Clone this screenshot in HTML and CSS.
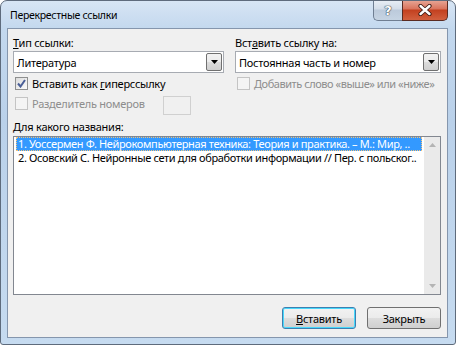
FILE: index.html
```html
<!DOCTYPE html>
<html lang="ru">
  <head>
    <meta charset="UTF-8" />
    <meta name="viewport" content="width=device-width, initial-scale=1.0" />
    <title>Перекрестные ссылки</title>
    <link rel="stylesheet" href="styles.css">
  </head>
  <body>
    <div class="window">
      <div class="titlebar">
        <span class="title">Перекрестные ссылки</span>
        <div class="caption-buttons">
          <div class="cap-btn help">?</div>
          <div class="cap-btn close">
            <svg width="14" height="12" viewBox="0 0 14 12">
              <path d="M2.5 2 L11.5 10 M11.5 2 L2.5 10" stroke="#3b1a14" stroke-width="4.2" stroke-linecap="round" />
              <path d="M2.5 2 L11.5 10 M11.5 2 L2.5 10" stroke="#ffffff" stroke-width="2.4" stroke-linecap="round" />
            </svg>
          </div>
        </div>
      </div>

      <div class="client">
        <div class="columns">
          <div class="col">
            <div class="field-label"><u>Т</u>ип ссылки:</div>
            <div class="combo">
              <span class="combo-text">Литература</span>
              <span class="combo-btn">
                <svg width="7" height="4" viewBox="0 0 7 4"><path d="M0 0 H7 L3.5 4 Z" fill="#000" /></svg>
              </span>
            </div>
            <div class="check-row first">
              <span class="checkbox checked">
                <svg width="9" height="9" viewBox="0 0 9 9">
                  <path d="M1 4.5 L3.5 7.5 L8 1" fill="none" stroke="#4a5f97" stroke-width="2" />
                </svg>
              </span>
              <span>Вставить как <u>г</u>иперссылку</span>
            </div>
            <div class="check-row second disabled">
              <span class="checkbox"></span>
              <span>Разделитель номеров</span>
              <span class="small-input"></span>
            </div>
          </div>

          <div class="col">
            <div class="field-label">Вст<u>а</u>вить ссылку на:</div>
            <div class="combo">
              <span class="combo-text">Постоянная часть и номер</span>
              <span class="combo-btn">
                <svg width="7" height="4" viewBox="0 0 7 4"><path d="M0 0 H7 L3.5 4 Z" fill="#000" /></svg>
              </span>
            </div>
            <div class="check-row first disabled tight">
              <span class="checkbox"></span>
              <span>Добавить слово «выше» или «ниже»</span>
            </div>
          </div>
        </div>

        <div class="field-label list-label">Для какого названия:</div>
        <div class="listbox">
          <div class="list-items">
            <div class="item selected">1. Уоссермен Ф. Нейрокомпьютерная техника: Теория и практика. – М.: Мир, ..</div>
            <div class="item">2. Осовский С. Нейронные сети для обработки информации // Пер. с польског..</div>
          </div>
          <div class="scrollbar">
            <svg width="7" height="4" viewBox="0 0 7 4"><path d="M0 4 H7 L3.5 0 Z" fill="#b4b4b4" /></svg>
            <svg width="7" height="4" viewBox="0 0 7 4"><path d="M0 0 H7 L3.5 4 Z" fill="#b4b4b4" /></svg>
          </div>
        </div>

        <div class="buttons">
          <button class="btn default"><u>В</u>ставить</button>
          <button class="btn">Закрыть</button>
        </div>
      </div>
    </div>
  </body>
</html>
```

FILE: styles.css
```css
body {
  margin: 0;
  padding: 0;
  font-family: "Noto Sans", "Open Sans", sans-serif;
  font-size: 11px;
  line-height: 15px;
  letter-spacing: -0.25px;
  color: #000;
  background: #fff;
}

.window {
  box-sizing: border-box;
  width: 456px;
  height: 345px;
  border: 1px solid #5e6b7c;
  border-radius: 7px 7px 3px 3px;
  background: linear-gradient(to bottom, #d7e5f4, #c3d8ee 28px, #bad1ea 120px, #c6dbf0);
  display: flex;
  flex-direction: column;
  overflow: hidden;
}

.titlebar {
  height: 28px;
  display: flex;
  align-items: flex-start;
}

.title {
  margin: 7px 0 0 9px;
  font-size: 10.5px;
  letter-spacing: -0.3px;
  color: #000;
}

.caption-buttons {
  margin-left: auto;
  margin-right: 7px;
  display: flex;
  margin-top: -1px;
}

.cap-btn {
  box-sizing: border-box;
  height: 21px;
  display: flex;
  align-items: center;
  justify-content: center;
}

.help {
  width: 29px;
  border: 1px solid #6f7e92;
  border-top: none;
  border-right: none;
  border-radius: 0 0 0 5px;
  background: linear-gradient(to bottom, #e9eff6, #d3dde9 45%, #bccadb 50%, #c6d4e3);
  color: #fff;
  font-family: "DejaVu Sans", sans-serif;
  font-weight: bold;
  font-size: 13px;
  letter-spacing: 0;
  text-shadow: 0 0 1px #33404f, 0 0 1px #33404f, 0 0 1px #33404f;
}

.close {
  width: 46px;
  border: 1px solid #5a2b22;
  border-top: none;
  border-radius: 0 0 5px 0;
  background: linear-gradient(to bottom, #e8a898, #d9735c 45%, #c3401f 50%, #d2603f);
}

.client {
  flex: 1;
  margin: 0 7px 6px 6px;
  border: 1px solid #8596ad;
  background: #f0f0f0;
  padding: 6px 6px 8px 5px;
}

.columns {
  display: grid;
  grid-template-columns: 211px 206px;
  column-gap: 11px;
}

.field-label {
  height: 15px;
}

.combo {
  box-sizing: border-box;
  margin-top: 1px;
  height: 22px;
  border: 1px solid #a7abb2;
  background: #fff;
  display: flex;
  align-items: center;
  padding: 0 1px 0 3px;
}

.combo-text {
  flex: 1;
}

.combo-btn {
  box-sizing: border-box;
  width: 16px;
  height: 18px;
  border: 1px solid #707070;
  border-radius: 2px;
  background: linear-gradient(to bottom, #f2f2f2, #ebebeb 50%, #dcdcdc 50%, #cfcfcf);
  display: flex;
  align-items: center;
  justify-content: center;
}

.check-row {
  display: flex;
  align-items: flex-start;
  gap: 4px;
  padding-left: 2px;
  white-space: nowrap;
}

.check-row.tight {
  letter-spacing: -0.45px;
}

.check-row.first {
  margin-top: 3px;
}

.check-row.second {
  margin-top: 5px;
}

.checkbox {
  box-sizing: border-box;
  width: 13px;
  height: 13px;
  margin-top: 1px;
  border: 1px solid #8e8f8f;
  background: linear-gradient(135deg, #dcdcdc, #fbfbfb);
  display: flex;
  align-items: center;
  justify-content: center;
  flex-shrink: 0;
}

.disabled {
  color: #8d8d8d;
}

.disabled .checkbox {
  border-color: #c4c4c4;
  background: #f4f4f4;
}

.small-input {
  box-sizing: border-box;
  width: 28px;
  height: 19px;
  margin-left: 14px;
  border: 1px solid #d0d0d0;
  background: #f0f0f0;
}

.list-label {
  margin-top: 4px;
}

.listbox {
  box-sizing: border-box;
  margin-top: 2px;
  height: 159px;
  border: 1px solid #828790;
  background: #fff;
  display: flex;
}

.list-items {
  flex: 1;
  min-width: 0;
  padding: 0 2px 0 2px;
}

.item {
  height: 14px;
  line-height: 14px;
  padding-left: 2px;
  letter-spacing: -0.35px;
  white-space: nowrap;
  overflow: hidden;
  text-overflow: ellipsis;
}

.item.selected {
  background: #3399ff;
  color: #fff;
  outline: 1px dotted #f5c27a;
  outline-offset: -1px;
}

.scrollbar {
  width: 16px;
  background: #eaeaea;
  display: flex;
  flex-direction: column;
  justify-content: space-between;
  align-items: center;
  padding: 6px 0;
  box-sizing: border-box;
}

.buttons {
  margin-top: 12px;
  display: flex;
  justify-content: flex-end;
  gap: 11px;
}

.btn {
  box-sizing: border-box;
  width: 74px;
  height: 22px;
  border: 1px solid #707070;
  border-radius: 3px;
  background: linear-gradient(to bottom, #f2f2f2, #ebebeb 50%, #dddddd 50%, #cfcfcf);
  font-family: inherit;
  font-size: 11px;
  letter-spacing: -0.25px;
  color: #000;
  padding: 0;
}

.btn.default {
  border-color: #3c7fb1;
  box-shadow: inset 0 0 0 1px #48d8fb;
}
```
